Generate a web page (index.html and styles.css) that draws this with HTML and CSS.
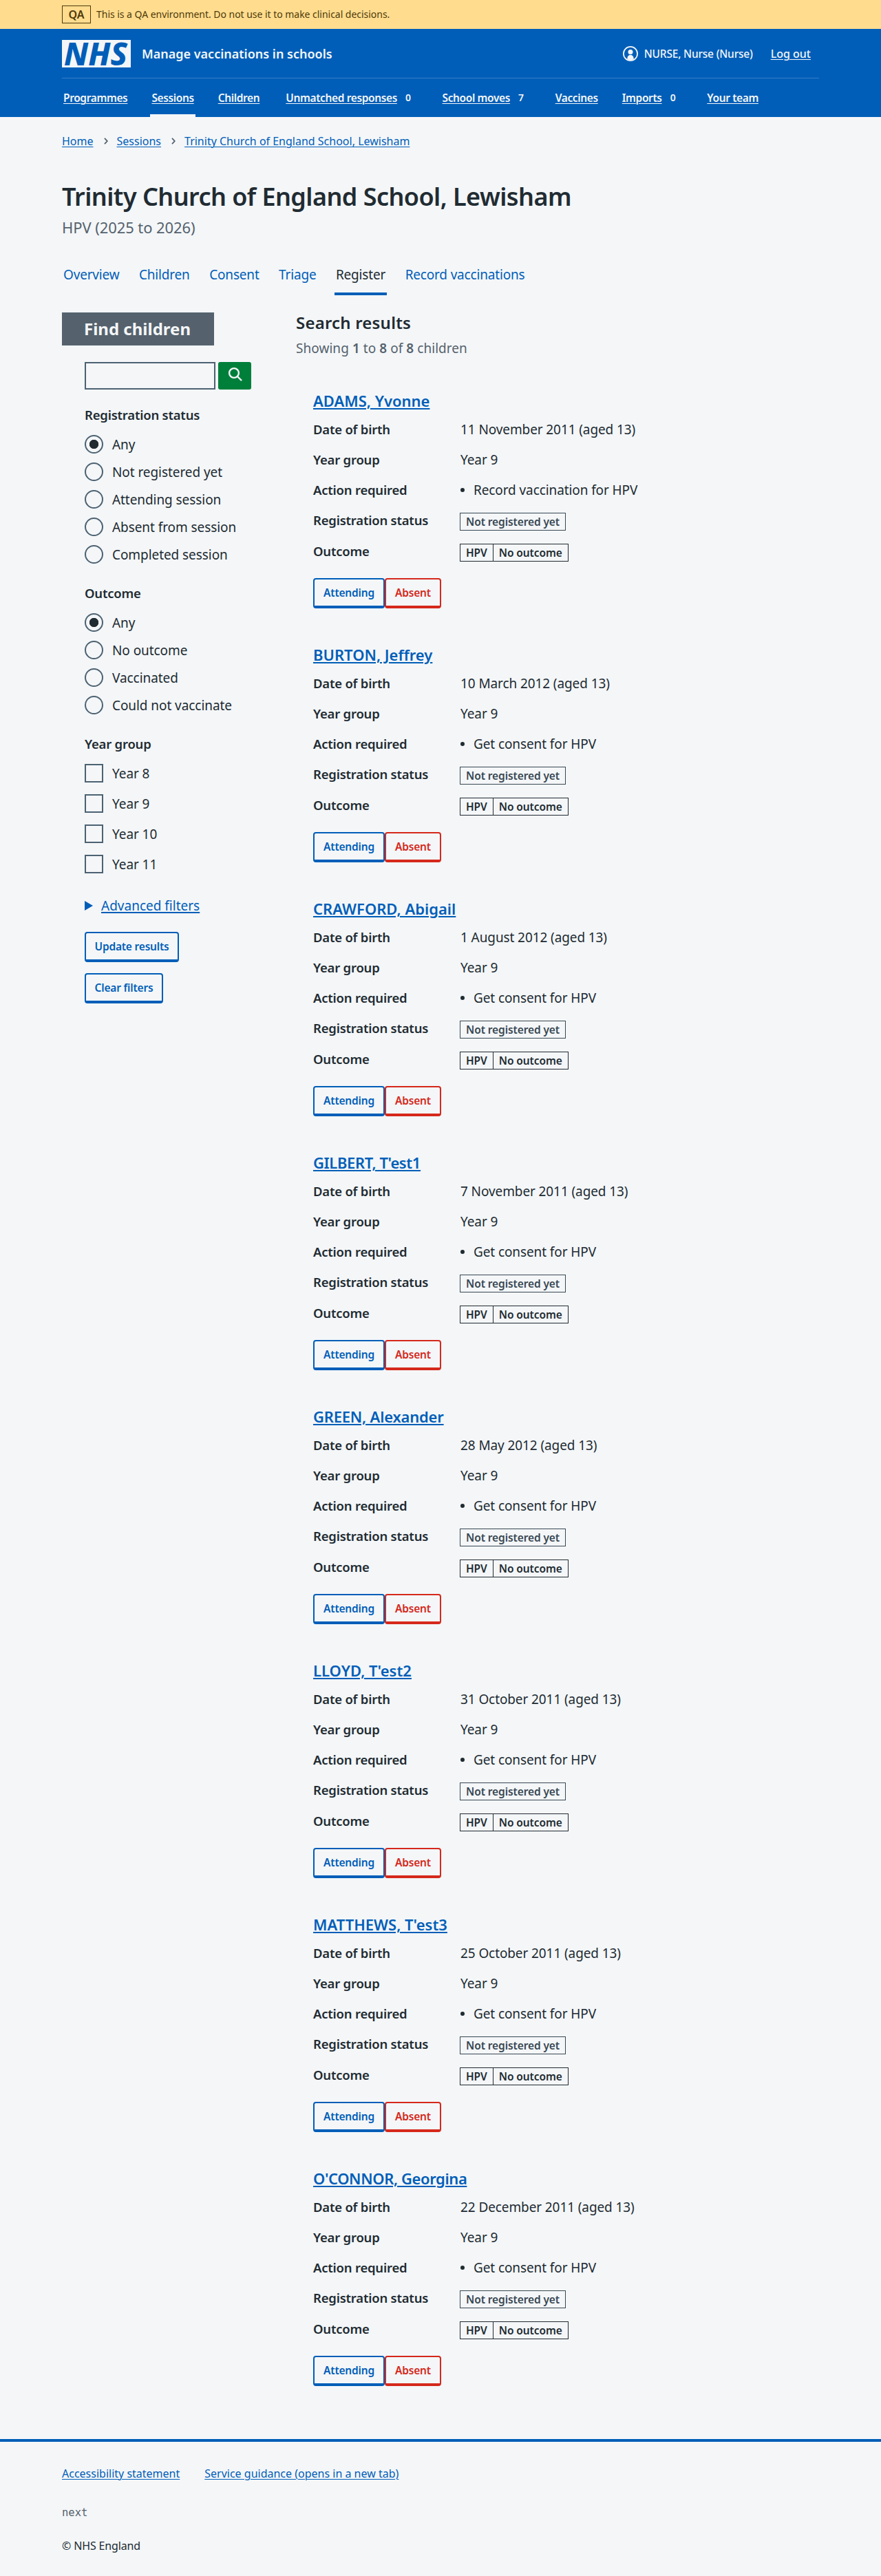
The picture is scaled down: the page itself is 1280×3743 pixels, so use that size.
FILE: index.html
```html
<!DOCTYPE html>
<html lang="en">
<head>
<meta charset="utf-8">
<title>Trinity Church of England School, Lewisham – Manage vaccinations in schools</title>
<link rel="stylesheet" href="styles.css">
</head>
<body>
<div class="environment">
  <strong class="environment-tag">QA</strong>
  <span>This is a QA environment. Do not use it to make clinical decisions.</span>
</div>
<header class="header">
  <div class="header-top">
    <svg class="logo" width="100" height="40" viewBox="0 0 100 40" role="img" aria-label="NHS">
      <rect width="100" height="40" fill="#f4f6f8"/>
      <text class="logo-text" x="3" y="36.5" textLength="92" lengthAdjust="spacingAndGlyphs">NHS</text>
    </svg>
    <span class="service-name">Manage vaccinations in schools</span>
    <div class="account">
      <svg class="account-icon" width="22" height="22" viewBox="0 0 22 22" aria-hidden="true">
        <circle cx="11" cy="11" r="10.1" fill="none" stroke="#f4f6f8" stroke-width="1.8"/>
        <circle cx="11" cy="8.4" r="3.5" fill="#f4f6f8"/>
        <path d="M6.4 19V17.4a4.6 4.6 0 0 1 9.2 0V19Q11 22 6.4 19z" fill="#f4f6f8"/>
      </svg>
      <span>NURSE, Nurse (Nurse)</span>
      <a class="logout" href="#">Log out</a>
    </div>
  </div>
  <nav class="nav">
    <div class="nav-item"><a href="#">Programmes</a></div>
    <div class="nav-item nav-current"><a href="#">Sessions</a></div>
    <div class="nav-item"><a href="#">Children</a></div>
    <div class="nav-item nav-responses"><a href="#">Unmatched responses</a><span class="count">0</span></div>
    <div class="nav-item"><a href="#">School moves</a><span class="count">7</span></div>
    <div class="nav-item"><a href="#">Vaccines</a></div>
    <div class="nav-item"><a href="#">Imports</a><span class="count">0</span></div>
    <div class="nav-item"><a href="#">Your team</a></div>
  </nav>
</header>
<div class="container">
  <nav class="breadcrumb">
    <a href="#">Home</a>
    <svg width="6" height="10" viewBox="0 0 6 10" aria-hidden="true"><path d="M1 .8 4.8 5 1 9.2"/></svg>
    <a href="#">Sessions</a>
    <svg width="6" height="10" viewBox="0 0 6 10" aria-hidden="true"><path d="M1 .8 4.8 5 1 9.2"/></svg>
    <a href="#">Trinity Church of England School, Lewisham</a>
  </nav>
  <h1>Trinity Church of England School, Lewisham</h1>
  <p class="caption">HPV (2025 to 2026)</p>
  <nav class="tabs">
    <a href="#">Overview</a>
    <a href="#">Children</a>
    <a href="#">Consent</a>
    <a href="#">Triage</a>
    <a href="#" class="tab-current">Register</a>
    <a href="#">Record vaccinations</a>
  </nav>
  <div class="columns">
    <aside class="filters">
      <h2 class="filters-title">Find children</h2>
      <form class="filters-body">
        <div class="search">
          <input class="search-input" type="text" aria-label="Search">
          <button class="search-button" type="button" aria-label="Search">
            <svg width="22" height="22" viewBox="0 0 22 22" aria-hidden="true"><circle cx="9" cy="9" r="6.9"/><path d="M14 14l6 6"/></svg>
          </button>
        </div>
        <fieldset class="group">
          <legend>Registration status</legend>
          <label class="option"><span class="radio checked"></span>Any</label>
          <label class="option"><span class="radio"></span>Not registered yet</label>
          <label class="option"><span class="radio"></span>Attending session</label>
          <label class="option"><span class="radio"></span>Absent from session</label>
          <label class="option"><span class="radio"></span>Completed session</label>
        </fieldset>
        <fieldset class="group">
          <legend>Outcome</legend>
          <label class="option"><span class="radio checked"></span>Any</label>
          <label class="option"><span class="radio"></span>No outcome</label>
          <label class="option"><span class="radio"></span>Vaccinated</label>
          <label class="option"><span class="radio"></span>Could not vaccinate</label>
        </fieldset>
        <fieldset class="group group-years">
          <legend>Year group</legend>
          <label class="option"><span class="checkbox"></span>Year 8</label>
          <label class="option"><span class="checkbox"></span>Year 9</label>
          <label class="option"><span class="checkbox"></span>Year 10</label>
          <label class="option"><span class="checkbox"></span>Year 11</label>
        </fieldset>
        <a class="advanced" href="#">
          <svg width="12" height="14" viewBox="0 0 12 14" aria-hidden="true"><path d="M0 0l12 7-12 7z"/></svg>
          <span>Advanced filters</span>
        </a>
        <button class="button update" type="button">Update results</button>
        <button class="button clear" type="button">Clear filters</button>
      </form>
    </aside>
    <main class="results">
      <h2>Search results</h2>
      <p class="showing">Showing <b>1</b> to <b>8</b> of <b>8</b> children</p>
      <div class="cards">
        <article class="card">
          <h3><a href="#">ADAMS, Yvonne</a></h3>
          <dl>
            <dt>Date of birth</dt><dd>11 November 2011 (aged 13)</dd>
            <dt>Year group</dt><dd>Year 9</dd>
            <dt>Action required</dt><dd class="action">Record vaccination for HPV</dd>
            <dt>Registration status</dt><dd class="status"><span class="tag">Not registered yet</span></dd>
            <dt>Outcome</dt><dd class="status"><span class="tag programme">HPV</span><span class="tag outcome">No outcome</span></dd>
          </dl>
          <div class="actions"><button class="button attending" type="button">Attending</button><button class="button absent" type="button">Absent</button></div>
        </article>
        <article class="card">
          <h3><a href="#">BURTON, Jeffrey</a></h3>
          <dl>
            <dt>Date of birth</dt><dd>10 March 2012 (aged 13)</dd>
            <dt>Year group</dt><dd>Year 9</dd>
            <dt>Action required</dt><dd class="action">Get consent for HPV</dd>
            <dt>Registration status</dt><dd class="status"><span class="tag">Not registered yet</span></dd>
            <dt>Outcome</dt><dd class="status"><span class="tag programme">HPV</span><span class="tag outcome">No outcome</span></dd>
          </dl>
          <div class="actions"><button class="button attending" type="button">Attending</button><button class="button absent" type="button">Absent</button></div>
        </article>
        <article class="card">
          <h3><a href="#">CRAWFORD, Abigail</a></h3>
          <dl>
            <dt>Date of birth</dt><dd>1 August 2012 (aged 13)</dd>
            <dt>Year group</dt><dd>Year 9</dd>
            <dt>Action required</dt><dd class="action">Get consent for HPV</dd>
            <dt>Registration status</dt><dd class="status"><span class="tag">Not registered yet</span></dd>
            <dt>Outcome</dt><dd class="status"><span class="tag programme">HPV</span><span class="tag outcome">No outcome</span></dd>
          </dl>
          <div class="actions"><button class="button attending" type="button">Attending</button><button class="button absent" type="button">Absent</button></div>
        </article>
        <article class="card">
          <h3 class="name-tight"><a href="#">GILBERT, T'est1</a></h3>
          <dl>
            <dt>Date of birth</dt><dd>7 November 2011 (aged 13)</dd>
            <dt>Year group</dt><dd>Year 9</dd>
            <dt>Action required</dt><dd class="action">Get consent for HPV</dd>
            <dt>Registration status</dt><dd class="status"><span class="tag">Not registered yet</span></dd>
            <dt>Outcome</dt><dd class="status"><span class="tag programme">HPV</span><span class="tag outcome">No outcome</span></dd>
          </dl>
          <div class="actions"><button class="button attending" type="button">Attending</button><button class="button absent" type="button">Absent</button></div>
        </article>
        <article class="card">
          <h3 class="name-snug"><a href="#">GREEN, Alexander</a></h3>
          <dl>
            <dt>Date of birth</dt><dd>28 May 2012 (aged 13)</dd>
            <dt>Year group</dt><dd>Year 9</dd>
            <dt>Action required</dt><dd class="action">Get consent for HPV</dd>
            <dt>Registration status</dt><dd class="status"><span class="tag">Not registered yet</span></dd>
            <dt>Outcome</dt><dd class="status"><span class="tag programme">HPV</span><span class="tag outcome">No outcome</span></dd>
          </dl>
          <div class="actions"><button class="button attending" type="button">Attending</button><button class="button absent" type="button">Absent</button></div>
        </article>
        <article class="card">
          <h3><a href="#">LLOYD, T'est2</a></h3>
          <dl>
            <dt>Date of birth</dt><dd>31 October 2011 (aged 13)</dd>
            <dt>Year group</dt><dd>Year 9</dd>
            <dt>Action required</dt><dd class="action">Get consent for HPV</dd>
            <dt>Registration status</dt><dd class="status"><span class="tag">Not registered yet</span></dd>
            <dt>Outcome</dt><dd class="status"><span class="tag programme">HPV</span><span class="tag outcome">No outcome</span></dd>
          </dl>
          <div class="actions"><button class="button attending" type="button">Attending</button><button class="button absent" type="button">Absent</button></div>
        </article>
        <article class="card">
          <h3><a href="#">MATTHEWS, T'est3</a></h3>
          <dl>
            <dt>Date of birth</dt><dd>25 October 2011 (aged 13)</dd>
            <dt>Year group</dt><dd>Year 9</dd>
            <dt>Action required</dt><dd class="action">Get consent for HPV</dd>
            <dt>Registration status</dt><dd class="status"><span class="tag">Not registered yet</span></dd>
            <dt>Outcome</dt><dd class="status"><span class="tag programme">HPV</span><span class="tag outcome">No outcome</span></dd>
          </dl>
          <div class="actions"><button class="button attending" type="button">Attending</button><button class="button absent" type="button">Absent</button></div>
        </article>
        <article class="card">
          <h3 class="name-tight"><a href="#">O'CONNOR, Georgina</a></h3>
          <dl>
            <dt>Date of birth</dt><dd>22 December 2011 (aged 13)</dd>
            <dt>Year group</dt><dd>Year 9</dd>
            <dt>Action required</dt><dd class="action">Get consent for HPV</dd>
            <dt>Registration status</dt><dd class="status"><span class="tag">Not registered yet</span></dd>
            <dt>Outcome</dt><dd class="status"><span class="tag programme">HPV</span><span class="tag outcome">No outcome</span></dd>
          </dl>
          <div class="actions"><button class="button attending" type="button">Attending</button><button class="button absent" type="button">Absent</button></div>
        </article>
      </div>
    </main>
  </div>
</div>
<footer class="footer">
  <div class="footer-links">
    <a href="#">Accessibility statement</a>
    <a href="#">Service guidance (opens in a new tab)</a>
  </div>
  <p class="version">next</p>
  <p class="copyright">© NHS England</p>
</footer>
</body>
</html>
```
FILE: styles.css
```css
* { box-sizing: border-box; }
body {
  margin: 0;
  background: #f4f6f8;
  color: #212b32;
  font: 19px/28px "Noto Sans", "Open Sans", sans-serif;
}
h1, h2, h3, p, dl, dd { margin: 0; }
a { color: #005eb8; text-underline-offset: 2px; text-decoration-thickness: 1px; }
button, input { font: inherit; }

.environment {
  display: flex;
  align-items: center;
  gap: 8px;
  height: 42px;
  padding: 0 90px;
  background: #ffdc8e;
  color: #4d3a0a;
  font-size: 14px;
  letter-spacing: -0.03px;
}
.environment-tag {
  width: 42px;
  height: 26px;
  border: 1px solid #4d3a0a;
  font-size: 16px;
  font-weight: 600;
  line-height: 24px;
  text-align: center;
}

.header {
  height: 128px;
  padding: 0 90px;
  background: #005eb8;
  color: #f4f6f8;
}
.header a { color: #f4f6f8; }
.header-top {
  display: flex;
  align-items: center;
  height: 72px;
  border-bottom: 1px solid #337ec6;
}
.logo { display: block; overflow: visible; }
.logo-text {
  font: italic 800 46px "Noto Sans", sans-serif;
  fill: #005eb8;
}
.service-name {
  margin-left: 16px;
  font-size: 18px;
  font-weight: 600;
}
.account {
  display: flex;
  align-items: center;
  margin-left: auto;
  padding-right: 12px;
  font-size: 15.5px;
  font-weight: 500;
  letter-spacing: -0.2px;
}
.account-icon { margin-right: 9px; }
.logout { margin-left: 26px; font-size: 16px; letter-spacing: 0; }
.nav {
  display: flex;
  gap: 31px;
  height: 56px;
  font-size: 15.5px;
  font-weight: 600;
  letter-spacing: -0.38px;
}
.nav-item {
  display: flex;
  align-items: center;
  padding: 3px 2px 4px;
}
.nav-current {
  padding-bottom: 0;
  border-bottom: 4px solid #f4f6f8;
}
.nav-responses { margin-left: 3px; }
.count { margin: 0 11px 0 12px; font-size: 14px; }

.container { padding: 0 90px; }
.breadcrumb {
  display: flex;
  align-items: center;
  gap: 15px;
  height: 24px;
  margin-top: 23px;
  font-size: 16px;
}
.breadcrumb svg { margin-right: -2px; }
.breadcrumb path { fill: none; stroke: #55626d; stroke-width: 1.8; }
h1 {
  margin-top: 48px;
  font-size: 36px;
  font-weight: 600;
  line-height: 42px;
  letter-spacing: -0.56px;
}
.caption {
  margin-top: 7px;
  color: #55626d;
  font-size: 22px;
  line-height: 32px;
  letter-spacing: -0.09px;
}
.tabs {
  display: flex;
  gap: 24.5px;
  height: 57px;
  margin-top: 26px;
  letter-spacing: -0.18px;
}
.tabs a {
  padding: 13px 2px 0;
  text-decoration: none;
}
.tabs .tab-current {
  border-bottom: 4px solid #005eb8;
  color: #212b32;
}

.columns {
  display: grid;
  grid-template-columns: 340px 1fr;
  margin-top: 25px;
}
.filters-title {
  width: 221px;
  height: 48px;
  padding-left: 32px;
  background: #55626d;
  color: #f4f6f8;
  font-size: 24px;
  font-weight: 700;
  line-height: 48px;
}
.filters-body {
  display: flex;
  flex-direction: column;
  align-items: flex-start;
  padding: 24px 0 0 33px;
}
.search { display: flex; gap: 4px; }
.search-input {
  width: 190px;
  height: 40px;
  border: 2px solid #4c6272;
  background: transparent;
}
.search-button {
  width: 48px;
  height: 40px;
  padding: 7px 0 11px 1px;
  border: 0;
  border-radius: 3px;
  background: #007f3b;
}
.search-button svg {
  display: block;
  margin: auto;
  fill: none;
  stroke: #f4f6f8;
  stroke-width: 2.4;
}
.group {
  min-width: 0;
  margin: 23px 0 0;
  padding: 0;
  border: 0;
}
.group legend {
  padding: 0;
  margin-bottom: 8px;
  font-size: 18.5px;
  font-weight: 600;
  letter-spacing: -0.22px;
}
.group-years legend { margin-bottom: 6px; }
.option {
  display: flex;
  align-items: center;
  gap: 13px;
  height: 40px;
  padding-top: 1px;
  letter-spacing: -0.07px;
}
.group-years .option { height: 44px; }
.radio, .checkbox {
  width: 27px;
  height: 27px;
  margin-top: -1px;
  border: 2px solid #4c6272;
}
.radio { border-radius: 50%; }
.radio.checked { background: radial-gradient(circle, #212b32 6.3px, transparent 7px); }
.advanced {
  display: flex;
  align-items: center;
  gap: 12px;
  margin-top: 25px;
  text-decoration: none;
}
.advanced span { text-decoration: underline 2px; text-underline-offset: 2px; }
.advanced path { fill: #005eb8; }
.button {
  height: 44px;
  padding: 0;
  border: 2px solid #005eb8;
  border-bottom-width: 4px;
  border-radius: 4px;
  background: transparent;
  color: #005eb8;
  font-size: 15.5px;
  font-weight: 600;
  letter-spacing: -0.2px;
  line-height: 36px;
}
.update { width: 137px; margin-top: 24px; }
.clear { width: 114px; margin-top: 16px; }

.results h2 {
  font-size: 24px;
  font-weight: 600;
  line-height: 30px;
  letter-spacing: 0.2px;
}
.showing { margin-top: 8px; color: #55626d; letter-spacing: 0.05px; }
.showing b { font-weight: 600; }
.cards {
  display: grid;
  gap: 53px;
  padding: 48px 0 0 25px;
}
.card { height: 316px; }
h3 {
  font-size: 22px;
  font-weight: 600;
  line-height: 28px;
}
h3 a { text-decoration-thickness: 2px; }
.name-tight { letter-spacing: -0.4px; }
.name-snug { letter-spacing: -0.2px; }
dl {
  display: grid;
  grid-template-columns: 213px 1fr;
  grid-template-rows: repeat(4, 44px) 45px;
  align-items: center;
  margin-top: 6px;
}
dt {
  font-size: 18.5px;
  font-weight: 600;
  letter-spacing: -0.22px;
}
dd { letter-spacing: -0.1px; padding-left: 1px; }
.action {
  display: flex;
  align-items: center;
  gap: 13px;
}
.action::before {
  content: "";
  width: 6px;
  height: 6px;
  border-radius: 50%;
  background: #212b32;
}
.status { display: flex; padding: 4px 0 0; }
.tag {
  height: 26px;
  padding: 0 8px;
  border: 1px solid #384853;
  color: #384853;
  font-size: 15.5px;
  font-weight: 600;
  line-height: 24px;
  letter-spacing: -0.1px;
}
.programme, .outcome { border-color: #212b32; color: #212b32; }
.outcome { margin-left: -1px; }
.actions { display: flex; margin-top: 17px; }
.attending { width: 104px; }
.absent { width: 82px; border-color: #d5281b; color: #d5281b; }

.footer {
  margin-top: 77px;
  padding: 32px 90px 0;
  border-top: 4px solid #005eb8;
  height: 199px;
  font-size: 16px;
}
.footer-links { display: flex; gap: 36px; }
.version {
  margin-top: 29px;
  color: #55626d;
  font-family: "DejaVu Sans Mono", monospace;
  font-size: 15.5px;
}
.copyright { margin-top: 20px; letter-spacing: -0.15px; }
```
